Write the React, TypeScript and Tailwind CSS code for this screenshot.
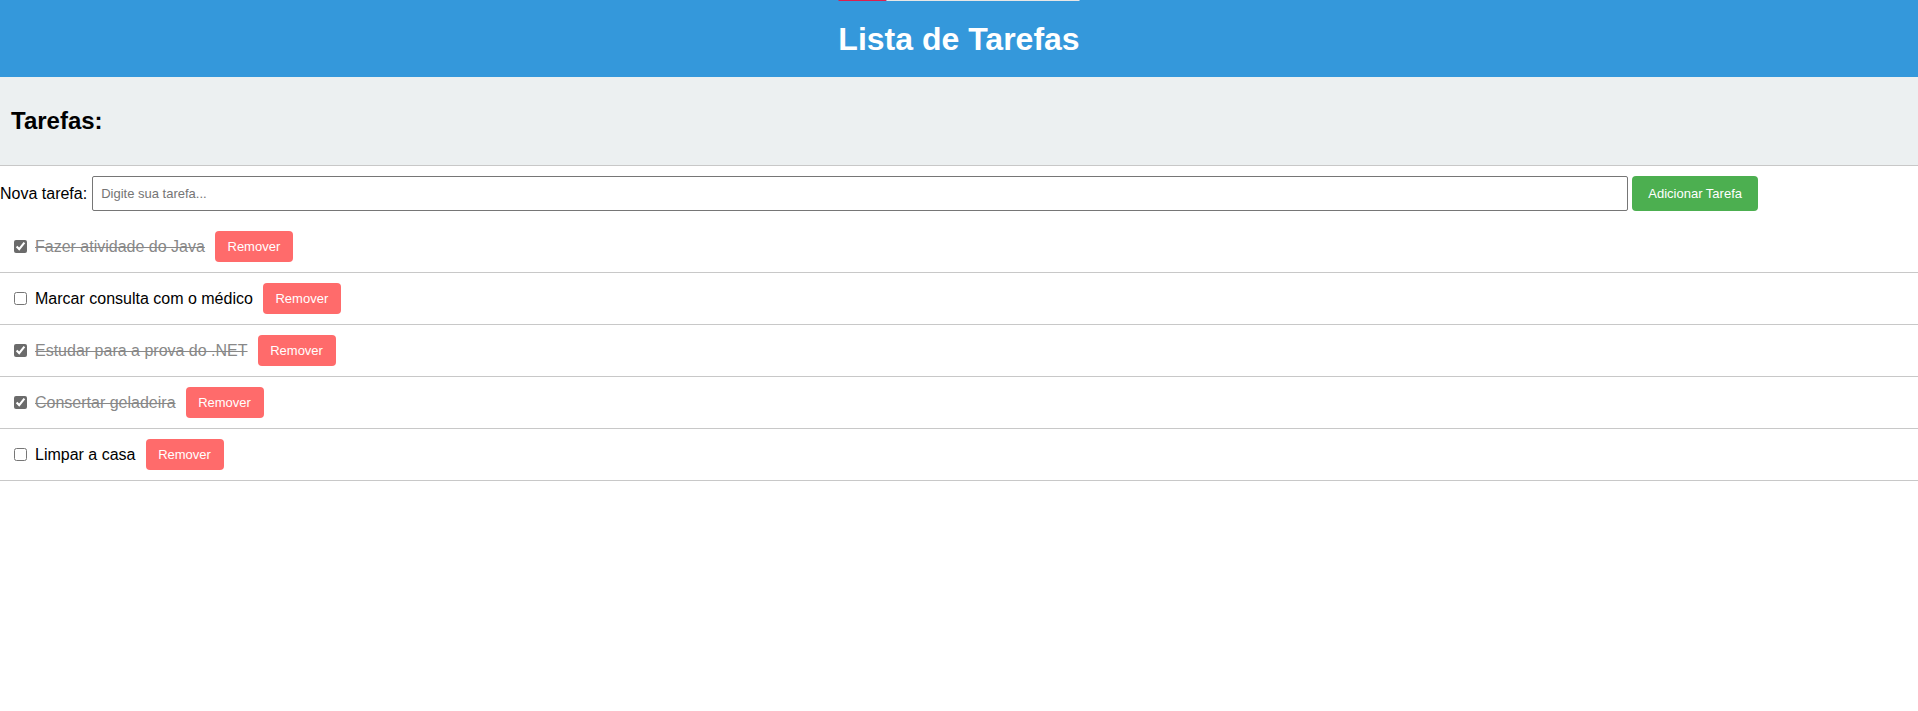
import { useState } from "react";

interface Task {
  id: number;
  text: string;
  done: boolean;
}

const initialTasks: Task[] = [
  { id: 1, text: "Fazer atividade do Java", done: true },
  { id: 2, text: "Marcar consulta com o médico", done: false },
  { id: 3, text: "Estudar para a prova do .NET", done: true },
  { id: 4, text: "Consertar geladeira", done: true },
  { id: 5, text: "Limpar a casa", done: false },
];

export default function App() {
  const [tasks, setTasks] = useState<Task[]>(initialTasks);
  const [text, setText] = useState("");

  const addTask = () => {
    if (!text.trim()) return;
    setTasks([...tasks, { id: Date.now(), text: text.trim(), done: false }]);
    setText("");
  };

  return (
    <div className="min-h-[711px] bg-white font-['Liberation_Sans',Arial,sans-serif] text-black">
      {/* Header */}
      <header className="relative flex h-[77px] items-center justify-center bg-[#3498db]">
        <div className="absolute left-1/2 top-0 flex h-px w-[241px] -translate-x-1/2">
          <span className="w-[48px] bg-[#dc1f4e]" />
          <span className="flex-1 bg-[#e6e6e6]" />
        </div>
        <h1 className="text-[32px] font-bold leading-none text-white">Lista de Tarefas</h1>
      </header>

      {/* Section title */}
      <div className="flex h-[89px] items-center border-b border-[#c8c8c8] bg-[#ecf0f1] pl-[11px]">
        <h2 className="text-[24px] font-bold leading-none">Tarefas:</h2>
      </div>

      {/* New task */}
      <div className="mt-[10px] flex h-[35px] items-center">
        <label className="text-[16px]">Nova tarefa:</label>
        <input
          type="text"
          value={text}
          onChange={(e) => setText(e.target.value)}
          placeholder="Digite sua tarefa..."
          className="ml-[5px] h-[35px] w-[1536px] rounded-[2px] border border-[#767676] px-[8px] text-[13px] placeholder-[#757575] outline-none"
        />
        <button
          onClick={addTask}
          className="ml-[4px] h-[35px] w-[126px] rounded-[4px] bg-[#4caf50] text-[13px] text-white"
        >
          Adicionar Tarefa
        </button>
      </div>

      {/* Task list */}
      <ul className="mt-[10px]">
        {tasks.map((t) => (
          <li key={t.id} className="flex items-center border-b border-[#c8c8c8] px-[10px] py-[10px]">
            <input
              type="checkbox"
              checked={t.done}
              onChange={() =>
                setTasks(tasks.map((x) => (x.id === t.id ? { ...x, done: !x.done } : x)))
              }
              className="ml-[4px] mr-[8px] h-[13px] w-[13px] accent-[#6b6b6b]"
            />
            <span className={`text-[16px] ${t.done ? "text-[#888] line-through" : ""}`}>{t.text}</span>
            <button
              onClick={() => setTasks(tasks.filter((x) => x.id !== t.id))}
              className="ml-[10px] h-[31px] w-[78px] rounded-[4px] bg-[#ff6b6b] text-[13px] text-white"
            >
              Remover
            </button>
          </li>
        ))}
      </ul>
    </div>
  );
}
